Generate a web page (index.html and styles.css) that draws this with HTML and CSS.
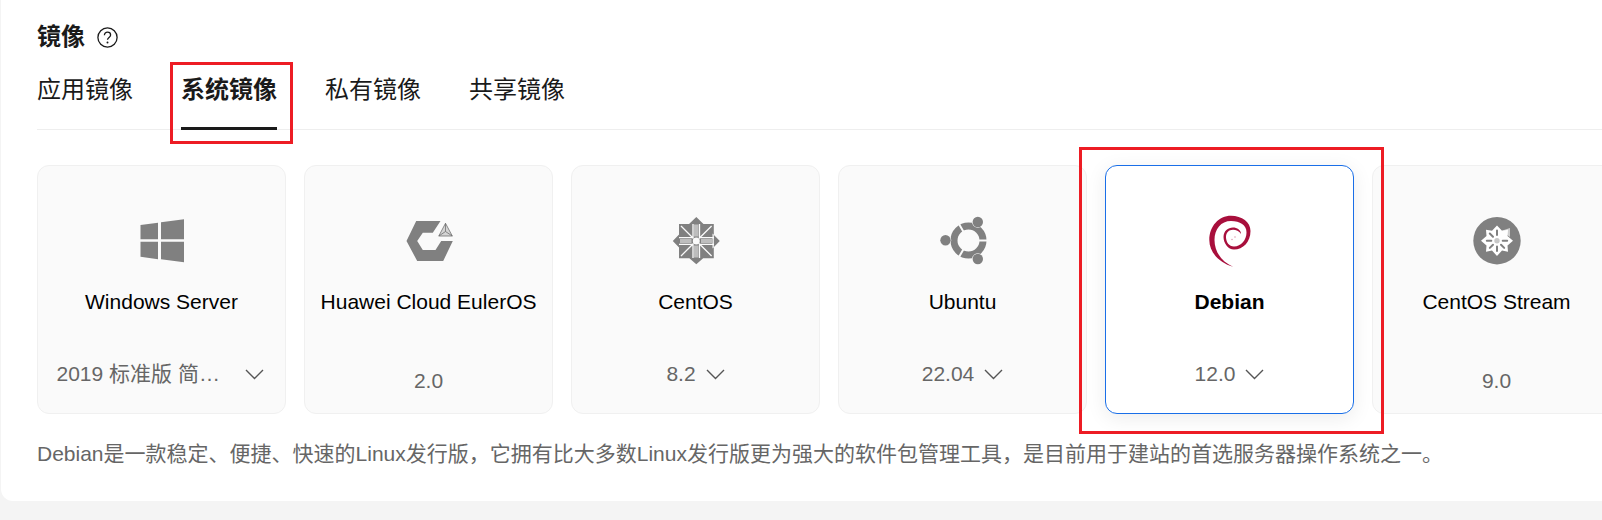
FILE: index.html
```html
<!doctype html>
<html lang="zh-CN">
	<head>
		<meta charset="UTF-8">
		<title>镜像</title>
		<link rel="stylesheet" href="styles.css">
	</head>

	<body>
		<div class="panel">
			<div class="title">
				<h1>镜像</h1>
				<svg class="help" viewBox="0 0 21 21">
					<circle cx="10.5" cy="10.5" r="9.6" />
					<path d="M7.4 8.2c0-1.9 1.4-3 3.1-3s3.1 1.1 3.1 2.8c0 2.4-3.1 2.5-3.1 4.8" />
					<circle class="dot" cx="10.5" cy="15.4" r="1" />
				</svg>
			</div>

			<div class="tabs">
				<div class="tab">应用镜像</div>
				<div class="tab active">系统镜像<span class="mark mark-tab"></span></div>
				<div class="tab">私有镜像</div>
				<div class="tab">共享镜像</div>
			</div>

			<div class="cards">
				<div class="card">
					<svg class="logo" viewBox="0 0 48 48">
						<path fill="#808080" d="M2.5 9 20 6.7V23.3H2.5ZM23 6.3 46 3.3V23.3H23ZM2.5 25.7H20V43.3L2.5 40.7ZM23 25.7H46V46.3L23 43.3Z" />
					</svg>
					<div class="name">Windows Server</div>
					<div class="version select long">
						<span class="value wide">2019 标准版 简…</span>
						<svg class="arrow" viewBox="0 0 19 11"><path d="M1 1l8.500 8.500L18 1" /></svg>
					</div>
				</div>

				<div class="card">
					<svg class="logo" viewBox="0 0 48 48">
						<path fill="#808080" d="M11.200 5H35.500L27.800 16.700H17.800L12.200 25 17.800 34H30.500L36.200 25H47.800L38.200 45H12.200L1.500 25Z" />
						<path fill="#d4d4d4" stroke="#707070" stroke-width=".8" d="M40.500 7.300 47.300 20H33.800Z M40.500 7.300V15.500M33.800 20 40.500 15.500 47.300 20" />
					</svg>
					<div class="name">Huawei Cloud EulerOS</div>
					<div class="version">2.0</div>
				</div>

				<div class="card">
					<svg class="logo" viewBox="0 0 48 48">
						<path fill="#808080" d="M7 8H41.800V42.300H7Z M24.300 1 32 8.500H16.500Z M24.300 48.300 16.500 41.500H32Z M.8 25 8 17.500V32.500Z M47.800 25 40.500 17.500V32.500Z" />
						<path fill="none" stroke="#fafafa" stroke-width="1.300" d="M21 8V22M27.500 8V22M21 28V42M27.500 28V42M7 21.700H21M7 28.300H21M27.500 21.700H42M27.500 28.300H42M9 10 21.500 22.500M39.600 10 27 22.500M9 40 21.500 27.500M39.600 40 27 27.500" />
						<path fill="#bdbdbd" d="M22 8.500H26.500V20.500H22ZM22 29.500H26.500V41.500H22ZM8 23H19.500V27H8ZM29 23H41V27H29Z" />
						<circle cx="24.300" cy="25" r="3.500" fill="#fafafa" />
					</svg>
					<div class="name">CentOS</div>
					<div class="version select">
						<span class="value">8.2</span>
						<svg class="arrow" viewBox="0 0 19 11"><path d="M1 1l8.500 8.500L18 1" /></svg>
					</div>
				</div>

				<div class="card">
					<svg class="logo" viewBox="0 0 48 48">
						<circle cx="29.500" cy="24.500" r="14.500" fill="none" stroke="#808080" stroke-width="7" />
						<path stroke="#fafafa" stroke-width="2" d="M29.500 24.500H48M29.500 24.500 20 8M29.500 24.500 20 41" />
						<g fill="#808080" stroke="#fafafa" stroke-width="1.200" paint-order="stroke">
							<circle cx="38.800" cy="6" r="5.200" />
							<circle cx="6.500" cy="24.300" r="5.200" />
							<circle cx="38.800" cy="43" r="5.200" />
						</g>
					</svg>
					<div class="name">Ubuntu</div>
					<div class="version select">
						<span class="value">22.04</span>
						<svg class="arrow" viewBox="0 0 19 11"><path d="M1 1l8.500 8.500L18 1" /></svg>
					</div>
				</div>

				<div class="card selected">
					<svg class="logo" viewBox="0 0 48 48">
						<path fill="#a80f3c" d="M27 50.700C14 47 3.300 37 3.300 24 3.300 10 13-.3 25-.3 36-.3 44.500 6 44.500 15 44.500 26 37 33.500 28 33.500 22 33.500 17.500 27 17.500 21 17.500 15 22 11.500 27 11.500 31 11.500 35 14 35 18 33 15 30 13.700 27 13.700 23 13.700 20 16.500 20 21 20 26 23 30.500 28 30.500 35 30.500 40.500 24 40.500 16.500 40.500 9 34 5 25 5 15 5 8.500 13 8.500 24 8.500 36 16 46 27 50.700Z" />
						<circle cx="29" cy="21" r=".7" fill="#d98aa3" />
						<circle cx="26" cy="23.500" r=".7" fill="#d98aa3" />
					</svg>
					<div class="name">Debian</div>
					<div class="version select">
						<span class="value">12.0</span>
						<svg class="arrow" viewBox="0 0 19 11"><path d="M1 1l8.500 8.500L18 1" /></svg>
					</div>
					<span class="mark mark-card"></span>
				</div>

				<div class="card">
					<svg class="logo" viewBox="0 0 48 48">
						<circle cx="24" cy="24.700" r="23.700" fill="#808080" />
						<path fill="#cfcfcf" d="M28 15 37 12V21Z" />
						<path fill="#fff" d="M24 9.500 29 14.800 35 13.700 34.500 20 40 24.700 34.500 29.400 35 35.700 29 34.600 24 39.900 19 34.600 13 35.700 13.500 29.400 8 24.700 13.500 20 13 13.700 19 14.800Z" />
						<path stroke="#808080" stroke-width="2" stroke-linecap="round" fill="none" d="M24 14.500V19M24 30.500V35M13.800 24.700H18.300M29.700 24.700H34.200M16.800 17.500 20 20.700M31.200 31.900 28 28.700M16.800 31.900 20 28.700" />
						<circle cx="24" cy="24.700" r="2.700" fill="#c8c8c8" />
					</svg>
					<div class="name">CentOS Stream</div>
					<div class="version">9.0</div>
				</div>
			</div>

			<p class="desc">Debian是一款稳定、便捷、快速的Linux发行版，它拥有比大多数Linux发行版更为强大的软件包管理工具，是目前用于建站的首选服务器操作系统之一。</p>
		</div>
	</body>
</html>
```

FILE: styles.css
```css
* {
	padding: 0;
	margin: 0;
	box-sizing: border-box;
}
body {
	background-color: #f4f4f4;
	color: #000;
	font-family: "Liberation Sans", "Noto Sans CJK SC", sans-serif;
	height: 520px;
	overflow: hidden;
}
.panel {
	background-color: #fff;
	margin-left: 1px;
	height: 501px;
	padding: 22px 0 0 36px;
	border-bottom-left-radius: 12px;
	overflow: hidden;
}
.title {
	display: flex;
	align-items: center;
	gap: 12px;
	height: 30px;
}
h1 {
	font-size: 24px;
	line-height: 30px;
	color: #1a1a1a;
}
.help {
	width: 21px;
	height: 21px;
	fill: none;
	stroke: #1a1a1a;
	stroke-width: 1.3;
}
.help .dot {
	fill: #1a1a1a;
	stroke: none;
}
.tabs {
	display: flex;
	gap: 48px;
	margin-top: 20px;
	border-bottom: 1px solid #eee;
	height: 58px;
}
.tab {
	position: relative;
	font-size: 24px;
	line-height: 36px;
	height: 58px;
	color: #1a1a1a;
}
.tab.active {
	font-weight: bold;
	border-bottom: 3px solid #1a1a1a;
}
.mark {
	position: absolute;
	z-index: 1;
	border: 3px solid #ed1c24;
	pointer-events: none;
}
.mark-tab {
	top: -10px;
	left: -11px;
	right: -16px;
	bottom: -17px;
}
.mark-card {
	top: -19px;
	left: -27px;
	right: -31px;
	bottom: -21px;
}
.cards {
	display: flex;
	gap: 18px;
	margin-top: 35px;
}
.card {
	position: relative;
	flex: none;
	display: flex;
	flex-direction: column;
	align-items: center;
	width: 249px;
	height: 249px;
	padding-top: 50px;
	background-color: #fafafa;
	border: 1px solid #f0f0f0;
	border-radius: 12px;
}
.card.selected {
	background-color: #fff;
	border-color: #1a6fe8;
	box-shadow: 0 4px 20px rgba(0, 0, 0, .08);
}
.card.selected .name {
	font-weight: bold;
}
.logo {
	width: 48px;
	height: 48px;
	flex: none;
	overflow: visible;
}
.name {
	font-size: 21px;
	line-height: 28px;
	margin-top: 24px;
	white-space: nowrap;
}
.version {
	margin-top: auto;
	margin-bottom: 19px;
	font-size: 21px;
	line-height: 26px;
	color: #666;
}
.version.select {
	display: flex;
	align-items: center;
	gap: 10px;
	margin-bottom: 26px;
}
.version.long {
	margin-right: 3px;
}
.value {
	white-space: nowrap;
}
.value.wide {
	width: 178px;
}
.arrow {
	width: 19px;
	height: 11px;
	flex: none;
	fill: none;
	stroke: #555;
	stroke-width: 1.4;
}
.desc {
	margin-top: 25px;
	font-size: 21px;
	line-height: 30px;
	color: #666;
	white-space: nowrap;
}
```
